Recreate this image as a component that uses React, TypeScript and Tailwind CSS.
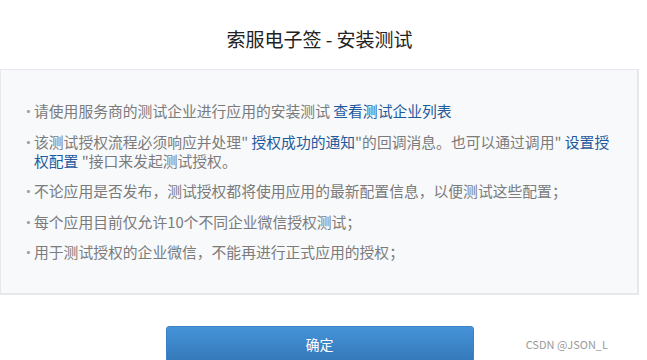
const font = {
  fontFamily: '"Noto Sans CJK SC", "Liberation Sans", sans-serif',
};

function Link({ children }: { children: React.ReactNode }) {
  return <span className="text-[#1f5a9c]">{children}</span>;
}

const items: React.ReactNode[] = [
  <>
    请使用服务商的测试企业进行应用的安装测试 <Link>查看测试企业列表</Link>
  </>,
  <>
    该测试授权流程必须响应并处理" <Link>授权成功的通知</Link>"的回调消息。也可以通过调用" <Link>设置授权配置</Link> "接口来发起测试授权。
  </>,
  <>不论应用是否发布，测试授权都将使用应用的最新配置信息，以便测试这些配置；</>,
  <>每个应用目前仅允许10个不同企业微信授权测试；</>,
  <>用于测试授权的企业微信，不能再进行正式应用的授权；</>,
];

export default function App() {
  return (
    <div className="relative w-[647px] h-[360px] overflow-hidden bg-white" style={font}>
      <div className="w-[639px]">
        {/* 标题 */}
        <div className="h-[69px] pt-[8px] flex items-center justify-center">
          <h2 className="text-[19px] text-[#222] leading-none">索服电子签 - 安装测试</h2>
        </div>

        {/* 说明 */}
        <div className="border border-[#e6e8eb] border-r-2 border-b-2 bg-[#f7f9fb] pl-[20px] pr-[25px] pt-[31px] pb-[32px]">
          <ul className="space-y-[11.5px] text-[14.8px] leading-[19px] text-[#7b7b7b]">
            {items.map((item, i) => (
              <li key={i} className="flex">
                <span className="w-[13px] shrink-0 text-[#a0a0a0]">·</span>
                <span className="flex-1">{item}</span>
              </li>
            ))}
          </ul>
        </div>

        {/* 按钮 */}
        <div className="mt-[31px] flex justify-center">
          <button className="w-[308px] h-[38px] rounded-t-[3px] border border-[#3a83c8] bg-gradient-to-b from-[#4593d9] to-[#3377b7] text-white text-[14px] leading-none pb-[2px]">
            确定
          </button>
        </div>
      </div>

      <span className="absolute right-[39px] bottom-[10px] text-[11px] text-[#9a9a9a] leading-none">
        CSDN @JSON_L
      </span>
    </div>
  );
}
